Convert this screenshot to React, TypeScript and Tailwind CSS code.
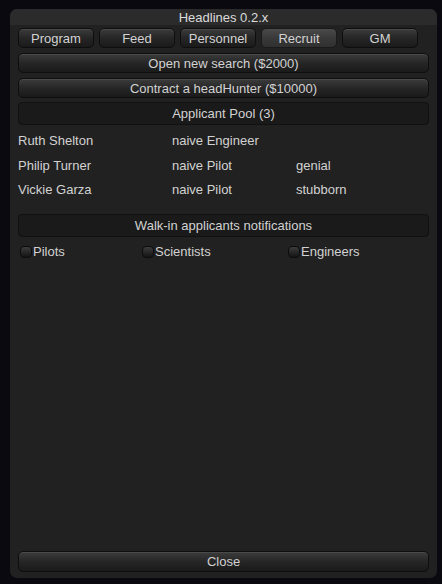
import React from "react";

const TABS = ["Program", "Feed", "Personnel", "Recruit", "GM"];

const APPLICANTS = [
  { name: "Ruth Shelton", job: "naive Engineer", trait: "" },
  { name: "Philip Turner", job: "naive Pilot", trait: "genial" },
  { name: "Vickie Garza", job: "naive Pilot", trait: "stubborn" },
];

const btn =
  "flex items-center justify-center rounded-[5px] border border-[#0e0e0e] bg-gradient-to-b from-[#3c3c3c] via-[#262626] to-[#1a1a1a] shadow-[inset_0_1px_0_#4a4a4a] text-[13px] text-[#d2d2d2] leading-none";

function Check({ label }: { label: string }) {
  return (
    <div className="flex items-center">
      <span className="w-[12px] h-[12px] rounded-[4px] border border-[#0c0c0c] bg-gradient-to-b from-[#3c3c3c] to-[#151515] mr-[1px]" />
      <span>{label}</span>
    </div>
  );
}

export default function App() {
  return (
    <div
      className="w-[442px] h-[584px] bg-[#09090f] pt-[9px] pl-[10px]"
      style={{ fontFamily: '"Liberation Sans", Arial, sans-serif' }}
    >
      <div className="w-[427px] h-[569px] rounded-[7px] bg-[#212121] flex flex-col overflow-hidden text-[13px] text-[#d2d2d2]">
        <div className="h-[16px] bg-[#2b2b2b] flex items-center justify-center text-[13px] text-[#dcdcdc] leading-none">
          Headlines 0.2.x
        </div>
        <div className="flex flex-col px-[8px] flex-1">
          <div className="flex gap-[5px] mt-[3px] pr-[11px]">
            {TABS.map((t) => (
              <div
                key={t}
                className={`${btn} flex-1 h-[20px] ${
                  t === "Recruit"
                    ? "from-[#4a4a4a] via-[#393939] to-[#303030] border-[#1a1a1a]"
                    : ""
                }`}
              >
                {t}
              </div>
            ))}
          </div>
          <div className={`${btn} h-[20px] mt-[5px]`}>Open new search ($2000)</div>
          <div className={`${btn} h-[20px] mt-[5px]`}>
            Contract a headHunter ($10000)
          </div>
          <div className="h-[23px] mt-[4px] rounded-[4px] border border-[#111] bg-[#1a1a1a] flex items-center justify-center">
            Applicant Pool (3)
          </div>
          <div className="mt-[4px]">
            {APPLICANTS.map((a, i) => (
              <div
                key={a.name}
                className={`flex items-center ${i === 1 ? "h-[25px]" : "h-[24px]"}`}
              >
                <span className="w-[154px]">{a.name}</span>
                <span className="w-[124px]">{a.job}</span>
                <span>{a.trait}</span>
              </div>
            ))}
          </div>
          <div className="h-[23px] mt-[12px] rounded-[4px] border border-[#111] bg-[#1a1a1a] flex items-center justify-center">
            Walk-in applicants notifications
          </div>
          <div className="h-[20px] mt-[5px] flex items-center pl-[2px]">
            <div className="w-[122px]">
              <Check label="Pilots" />
            </div>
            <div className="w-[146px]">
              <Check label="Scientists" />
            </div>
            <Check label="Engineers" />
          </div>
          <div className="flex-1" />
          <div className={`${btn} h-[21px] mb-[6px]`}>Close</div>
        </div>
      </div>
    </div>
  );
}
